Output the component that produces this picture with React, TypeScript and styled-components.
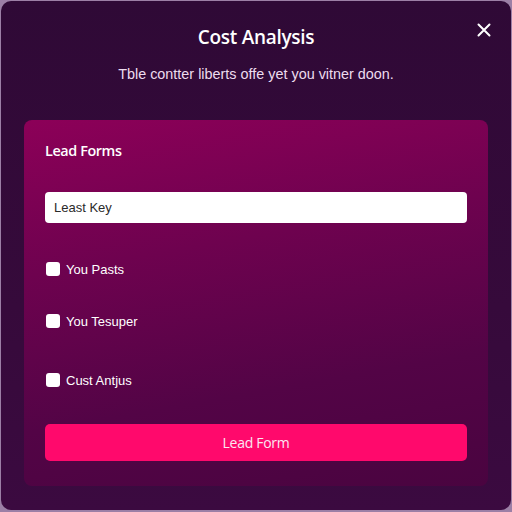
import React from "react";
import styled, { createGlobalStyle } from "styled-components";

const Global = createGlobalStyle`
  html, body { margin: 0; padding: 0; background: #9c7fa6; }
  body { width: 512px; height: 512px; overflow: hidden; font-family: "Liberation Sans", Arial, sans-serif; }
  #root { width: 512px; height: 512px; }
`;

const Modal = styled.div`
  position: relative;
  box-sizing: border-box;
  margin: 1px;
  width: 510px;
  height: 509px;
  border-radius: 10px;
  background: linear-gradient(180deg, #2f0936 0%, #360a3b 60%, #3b0a40 100%);
  display: flex;
  flex-direction: column;
  align-items: center;
  padding: 22px 23px 0 23px;
`;

const Title = styled.h1`
  margin: 0;
  font-family: "Open Sans", sans-serif;
  font-weight: 600;
  font-size: 19px;
  line-height: 28px;
  color: #ffffff;
  letter-spacing: -0.3px;
`;

const Close = styled.button`
  position: absolute;
  top: 18px;
  right: 16px;
  width: 22px;
  height: 22px;
  padding: 0;
  border: none;
  background: transparent;
  display: flex;
  align-items: center;
  justify-content: center;
`;

const Subtitle = styled.p`
  margin: 14px 0 0 0;
  font-size: 14.4px;
  line-height: 18px;
  color: #eddcee;
`;

const Card = styled.div`
  box-sizing: border-box;
  margin-top: 37px;
  width: 464px;
  height: 366px;
  border-radius: 8px;
  background: linear-gradient(170deg, #8c0058 0%, #6e024f 35%, #530446 70%, #4a0440 100%);
  padding: 20px 21px 0 21px;
  display: flex;
  flex-direction: column;
`;

const CardTitle = styled.h2`
  margin: 0;
  font-family: "Open Sans", sans-serif;
  font-weight: 600;
  font-size: 14.4px;
  line-height: 22px;
  color: #ffffff;
  letter-spacing: -0.4px;
`;

const Input = styled.div`
  box-sizing: border-box;
  margin-top: 30px;
  height: 31px;
  width: 422px;
  border-radius: 4px;
  background: #ffffff;
  padding: 0 9px;
  display: flex;
  align-items: center;
  font-size: 13px;
  color: #2a2a2a;
`;

const CheckRow = styled.label<{ $mt: number }>`
  display: flex;
  align-items: center;
  gap: 6px;
  margin-top: ${(p) => p.$mt}px;
  margin-left: 1px;
  font-size: 13px;
  color: #ffffff;
  height: 16px;
`;

const Box = styled.span`
  width: 14px;
  height: 14px;
  border-radius: 3px;
  background: #ffffff;
  display: inline-block;
`;

const Button = styled.button`
  margin-top: 36px;
  width: 422px;
  height: 37px;
  border: none;
  border-radius: 5px;
  background: #ff096c;
  color: #fbe7f2;
  font-family: "Open Sans", sans-serif;
  font-weight: 500;
  font-size: 14px;
  letter-spacing: -0.3px;
`;

export default function App() {
  return (
    <>
      <Global />
      <Modal>
        <Title>Cost Analysis</Title>
        <Close aria-label="Close">
          <svg width="14" height="14" viewBox="0 0 14 14">
            <path d="M1.5 1.5 L12.5 12.5 M12.5 1.5 L1.5 12.5" stroke="#ffffff" strokeWidth="2" strokeLinecap="round" />
          </svg>
        </Close>
        <Subtitle>Tble contter liberts offe yet you vitner doon.</Subtitle>
        <Card>
          <CardTitle>Lead Forms</CardTitle>
          <Input>Least Key</Input>
          <CheckRow $mt={38}><Box />You Pasts</CheckRow>
          <CheckRow $mt={36}><Box />You Tesuper</CheckRow>
          <CheckRow $mt={43}><Box />Cust Antjus</CheckRow>
          <Button>Lead Form</Button>
        </Card>
      </Modal>
    </>
  );
}
